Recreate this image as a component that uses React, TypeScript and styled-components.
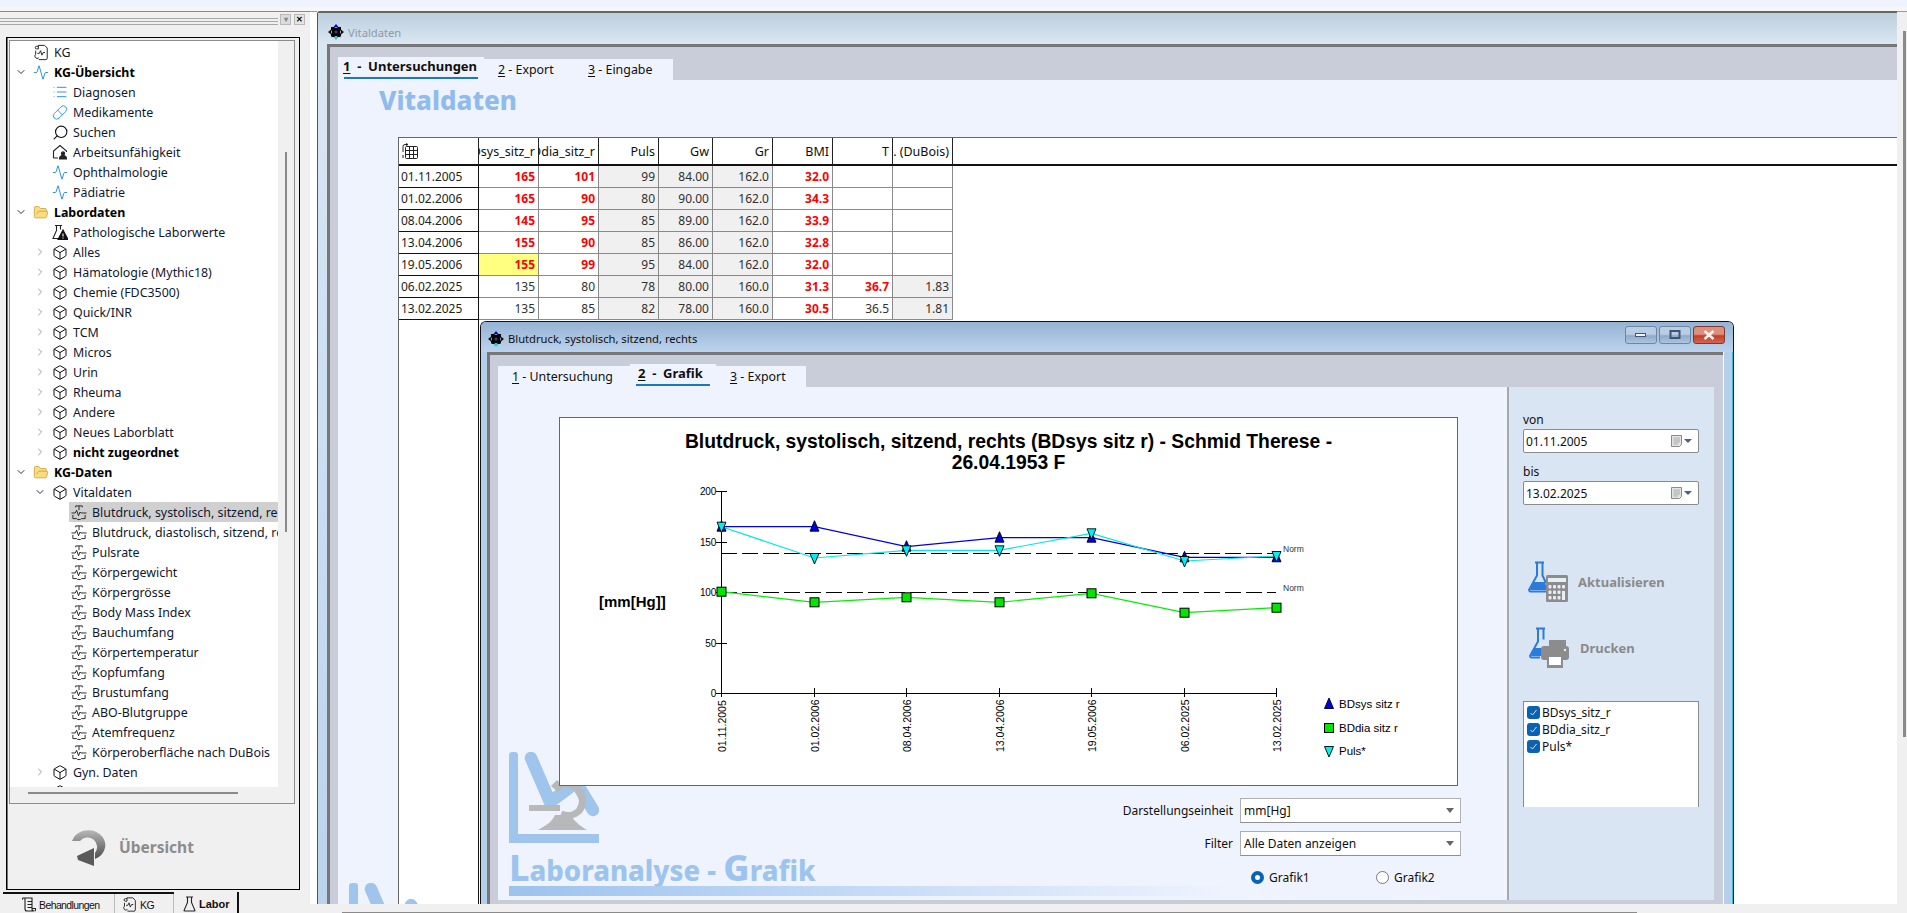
import React from "react";
import styled, { createGlobalStyle } from "styled-components";
import { Activity, Box, ChevronDown, ChevronRight, FolderOpen, List, Pill, Search } from "lucide-react";

const Global = createGlobalStyle`
  html, body { margin: 0; padding: 0; background: #f0f0f0; }
  * { box-sizing: border-box; }
  #root { width: 1907px; height: 913px; overflow: hidden; }
`;

const UI = `"Noto Sans", "Open Sans", sans-serif`;
const ARIAL = `"Liberation Sans", Arial, sans-serif`;

const Page = styled.div`
  width: 1907px; height: 913px; display: flex; flex-direction: column;
  background: #f0f0f0; font-family: ${UI}; font-size: 12px; color: #101010; overflow: hidden;
`;
const TopBand = styled.div`height: 7px; background: #eff3fe; flex: none;`;
const TopGap = styled.div`height: 4px; background: #f6f6f6; flex: none;`;
const Workspace = styled.div`flex: 1; display: flex; min-height: 0;`;

/* left dock */
const Dock = styled.aside`
  width: 310px; flex: none; display: flex; flex-direction: column;
  border-top: 1px solid #8a8a8a; background: #f0f0f0;
`;
const DockHead = styled.div`height: 25px; flex: none; display: flex; align-items: flex-start; padding: 2px 5px 0 0; gap: 2px;`;
const Grip = styled.div`
  width: 280px; height: 7px; margin-top: 4px;
  border-top: 1px solid #a8a8a8; border-bottom: 1px solid #a8a8a8;
  background: linear-gradient(#f0f0f0 2px, #a8a8a8 2px, #a8a8a8 3px, #f0f0f0 3px);
`;
const DockBtn = styled.div<{ $dark?: boolean }>`
  width: 11px; height: 11px; display: flex; align-items: center; justify-content: center;
  background: ${p => (p.$dark ? "#e4e4e4" : "#dcdcdc")}; border: 1px solid #b8b8b8;
  color: ${p => (p.$dark ? "#000" : "#888")}; font: bold 8px ${ARIAL};
  &:last-child { margin-left: 1px; }
`;
const DockFrame = styled.div`
  height: 853px; flex: none; margin: 0 10px 0 6px; border: 1px solid #000;
  box-shadow: inset 1px 0 0 #777;
  padding: 2px 4px 0 2px; display: flex; flex-direction: column; background: #f0f0f0;
`;
const TreeBox = styled.div`height: 764px; flex: none; border: 1px solid #8c8c8c; display: flex; flex-direction: column;`;
const TreeRowWrap = styled.div`display: flex; height: 746px; flex: none;`;
const Tree = styled.div`width: 268px; background: #fff; padding-top: 1px; overflow: hidden; flex: none;`;
const VTrack = styled.div`flex: 1; padding: 111px 0 0 7px;`;
const VThumb = styled.div`width: 2px; height: 380px; background: #8a8a8a;`;
const HTrack = styled.div`flex: 1; padding: 5px 0 0 18px;`;
const HThumb = styled.div`width: 210px; height: 2px; background: #8a8a8a;`;
const Row = styled.div<{ $level: number }>`
  height: 20px; display: flex; align-items: center; white-space: nowrap;
  padding-left: ${p => 5 + p.$level * 19}px;
`;
const ChevSlot = styled.span<{ $dark?: boolean }>`
  width: 16px; flex: none; display: flex; color: ${p => (p.$dark ? "#333" : "#a0a0a0")};
`;
const Item = styled.div<{ $selected?: boolean }>`
  flex: 1; height: 20px; display: flex; align-items: center; gap: 5px; padding-left: 2px; overflow: hidden;
  background: ${p => (p.$selected ? "#d0d0d0" : "transparent")};
`;
const IconSlot = styled.span`width: 16px; height: 16px; flex: none; display: flex; align-items: center; justify-content: center;`;
const Flip = styled.span`display: flex; transform: scaleX(-1);`;
const ItemLabel = styled.span<{ $bold?: boolean }>`
  font-size: 12.4px; font-weight: ${p => (p.$bold ? 700 : 400)}; color: ${p => (p.$bold ? "#000" : "#101830")};
`;
const Overview = styled.div`flex: 1; display: flex; align-items: center; gap: 11px; padding: 0 0 0 61px;`;
const OverviewText = styled.span`font-size: 15.5px; font-weight: 700; color: #8c8c8c;`;
const BottomTabs = styled.div`height: 23px; flex: none; display: flex; margin: 2px 0 0 3px; padding-left: 12px; border-top: 2px solid transparent; position: relative; border-image: linear-gradient(90deg, #111 171px, transparent 171px) 1;`;
const DockTab = styled.div<{ $active?: boolean; $w: number; $pad: number }>`
  width: ${p => p.$w}px; padding-left: ${p => p.$pad}px; display: flex; align-items: center; gap: 3px;
  font-family: ${ARIAL}; font-size: ${p => (p.$active ? 11 : 10.5)}px; letter-spacing: ${p => (p.$active ? 0 : -0.6)}px; font-weight: ${p => (p.$active ? 700 : 400)};
  border-right: 1px solid ${p => (p.$active ? "#111" : "#bbb")};
  ${p => p.$active && "border-right-width: 2px; margin-top: -2px;"}
`;
const WhiteGutter = styled.div`width: 7px; flex: none; background: #fff; border-top: 1px solid #9a9a9a; margin-bottom: 9px;`;

/* main window */
const MainColumn = styled.div`width: 1580px; flex: none; display: flex; flex-direction: column;`;
const MainWindow = styled.section`flex: 1; display: flex; flex-direction: column; min-height: 0; border-left: 1px solid #555; border-top: 2px solid #666; border-radius: 3px 0 0 0;`;
const TitleBar = styled.div<{ $active?: boolean }>`
  height: ${p => (p.$active ? 30 : 31)}px; flex: none; display: flex; align-items: center; gap: 4px;
  padding: ${p => (p.$active ? "3px 0 0 7px" : "7px 0 0 10px")};
  font-size: 11.2px; color: ${p => (p.$active ? "#101010" : "#8e9aa5")};
  background: ${p => (p.$active ? "linear-gradient(#95b3d3, #bcd3ee)" : "linear-gradient(#bdcedc, #dae7f3)")};
`;
const WindowBody = styled.div`flex: 1; display: flex; min-height: 0; padding-left: 9px; background: linear-gradient(#dae7f3, #bcd3ee);`;
const Frame = styled.div`
  flex: 1; min-width: 0; display: flex; flex-direction: column;
  border-left: 3px solid #777; border-top: 3px solid #777; background: #c8cdd9; padding-left: 8px;
`;
const TabStrip = styled.div<{ $h: number }>`height: ${p => p.$h}px; flex: none; display: flex; align-items: flex-end;`;
const Tab = styled.div<{ $active?: boolean; $w: number; $pad: number }>`
  width: ${p => p.$w}px; height: ${p => (p.$active ? 23 : 21)}px; flex: none; padding-left: ${p => p.$pad}px;
  background: #eff3fe; position: relative; white-space: nowrap; line-height: ${p => (p.$active ? 18 : 21)}px;
  font-size: ${p => (p.$active ? 13 : 12.4)}px; font-weight: ${p => (p.$active ? 700 : 400)};
  u { text-underline-offset: 2px; }
`;
const TabLine = styled.div<{ $l: number; $r: number }>`
  position: absolute; left: ${p => p.$l}px; right: ${p => p.$r}px; bottom: 1px; height: 2px; background: #1a78c2;
`;
const MainContent = styled.div`flex: 1; min-height: 0; background: #eff3fe; position: relative; overflow: hidden; display: flex; flex-direction: column;`;
const Heading = styled.h1`
  margin: 4px 0 0 41px; height: 33px; font-size: 26px; line-height: 33px; font-weight: 800; color: #8fbcec; flex: none;
`;
const TableWrap = styled.div`
  flex: 1; margin: 20px 0 0 60px; background: #fff; border-left: 1px solid #666; border-top: 1px solid #666; min-height: 0;
`;
const Table = styled.table`
  width: 100%; table-layout: fixed; border-collapse: separate; border-spacing: 0; font-size: 12px;
`;
const Th = styled.th`
  height: 28px; padding: 0; font-weight: 400; font-size: 12.5px; border-right: 1px solid #222; border-bottom: 2px solid #111;
  &:last-child { border-right: none; }
`;
const ThInner = styled.div`display: flex; justify-content: flex-end; overflow: hidden; padding-right: 3px; white-space: nowrap;`;
const ThIcon = styled.div`display: flex; padding-left: 3px;`;
const DateCell = styled.td`
  height: 22px; padding: 0 0 0 2px; border-right: 1px solid #111; border-bottom: 1px solid #111; color: #222;
`;
const Td = styled.td<{ $gray?: boolean; $red?: boolean; $yellow?: boolean }>`
  height: 22px; padding: 0 3px 0 0; text-align: right; border-right: 1px solid #8a8a8a; border-bottom: 1px solid #8a8a8a;
  background: ${p => (p.$yellow ? "#ffff80" : p.$gray ? "#f0f0f0" : "#fff")};
  color: ${p => (p.$red ? "#ff0000" : "#303030")}; font-weight: ${p => (p.$red ? 700 : 400)};
`;
const EmptyCell = styled.td``;
const SpacerCell = styled.td`height: 585px; border-right: 1px solid #111; vertical-align: top;`;

/* sub window */
const SubWindow = styled.section`
  position: absolute; left: 142px; top: 241px; right: 163px; bottom: 0; display: flex; flex-direction: column;
  border: 1px solid #111; border-bottom: none; border-right: 1px solid #101030; border-radius: 6px 6px 0 0; overflow: hidden;
`;
const SubTitleText = styled.span`flex: 1;`;
const WinBtns = styled.div`display: flex; gap: 2px; padding-right: 8px; margin-top: -7px;`;
const WinBtn = styled.div<{ $close?: boolean }>`
  width: 32px; height: 18px; border-radius: 3px; display: flex; align-items: center; justify-content: center;
  border: 1px solid ${p => (p.$close ? "#7c3a30" : "#6d86a4")};
  background: ${p => (p.$close ? "linear-gradient(#dd8f7d 0 45%, #c0402a 55%, #d4654e)" : "linear-gradient(#b9cde3 0 45%, #8fabcb 55%, #adc4dd)")};
`;
const SubBody = styled.div`flex: 1; min-height: 0; display: flex; padding-left: 6px; background: #b6cfe9; border-right: 1px solid #25c4e4;`;
const SubFrame = styled.div`
  flex: 1; min-width: 0; display: flex; flex-direction: column; background: #c8cdd9;
  border-left: 3px solid #777; border-top: 3px solid #777; padding: 0 9px 4px 8px; margin-right: 9px;
  box-shadow: 1px 0 0 #fff;
`;
const SubContent = styled.div`flex: 1; min-height: 0; display: flex;`;
const GraphArea = styled.div`width: 1009px; flex: none; background: #eff3fe; position: relative; padding: 30px 0 0 61px; overflow: hidden;`;
const SidePanel = styled.div`flex: 1; background: #dae5f3; border-left: 2px solid #a8a8a8; padding: 24px 0 0 14px;`;
const ChartBox = styled.div`
  width: 899px; height: 369px; background: #fff; border: 1px solid #666; position: relative; z-index: 1;
`;
const ChartTitle = styled.div`
  height: 60px; padding-top: 13px; text-align: center; font: 700 19.3px/21px ${ARIAL}; color: #000;
`;
const ChartSvg = styled.svg`display: block;`;
const ControlRow = styled.div`
  display: flex; justify-content: flex-end; align-items: center; gap: 7px; height: 25px; padding-right: 46px; position: relative; z-index: 1;
`;
const Controls = styled.div`display: flex; flex-direction: column; gap: 8px; margin-top: 12px;`;
const SelectBox = styled.div`
  width: 221px; height: 25px; background: #fff; border: 1px solid #b0b0b0; border-bottom-color: #909090;
  display: flex; align-items: center; justify-content: space-between; padding: 0 6px 0 3px;
`;
const Caret = styled.span`width: 0; height: 0; border-left: 4px solid transparent; border-right: 4px solid transparent; border-top: 5px solid #666;`;
const RadioRow = styled.div`display: flex; margin: 13px 0 0 692px; position: relative; z-index: 1;`;
const RadioOpt = styled.label`width: 125px; display: flex; align-items: center; gap: 5px; height: 16px;`;
const RadioDot = styled.span<{ $on?: boolean }>`
  width: 13px; height: 13px; border-radius: 50%; background: #fff;
  border: ${p => (p.$on ? "4px solid #0a62b6" : "1px solid #777")};
`;
const Watermark = styled.div`position: absolute; left: 11px; top: 365px; width: 720px; display: flex; flex-direction: column;`;
const LogoSlot = styled.div<{ $clip?: boolean }>`
  display: flex;
  ${p => p.$clip && "position: absolute; left: 11px; top: 803px;"}
`;
const WmTitle = styled.div`
  height: 33px; margin-top: 7px; font: 800 27.500px/33px ${UI}; color: #9cc4ee; white-space: nowrap;
`;
const WmCap = styled.span`font-size: 36px;`;
const WmBar = styled.div`height: 10px; margin-top: 2px; background: linear-gradient(90deg, #9cc3ee, #eff3fe);`;

const SideLabel = styled.div`height: 18px; line-height: 17px;`;
const DateBox = styled.div`
  width: 176px; height: 24px; background: #fff; border: 1px solid #8a8a8a; border-radius: 2px;
  display: flex; align-items: center; justify-content: space-between; padding: 0 6px 0 2px; margin-bottom: 10px; font-size: 12px;
`;
const DateTools = styled.span`display: flex; align-items: center; gap: 2px;`;
const SmallCaret = styled.span`width: 0; height: 0; border-left: 4px solid transparent; border-right: 4px solid transparent; border-top: 4px solid #4f5f80;`;
const ActionBtn = styled.div<{ $mt: number }>`
  display: flex; align-items: center; gap: 10px; margin-top: ${p => p.$mt}px; padding-left: 4px;
`;
const ActionText = styled.span`font-size: 13px; font-weight: 700; color: #8a8a8a;`;
const CheckList = styled.div`
  width: 176px; height: 106px; margin-top: 32px; background: #fff; border: 1px solid #8a8a8a; border-bottom: none; padding: 2px;
`;
const CheckRow = styled.div`height: 17px; display: flex; align-items: center; gap: 2px;`;
const CheckMark = styled.span`width: 13px; height: 13px; border-radius: 3px; background: #0a62b6; display: flex; align-items: center; justify-content: center; margin-left: 1px;`;

const BottomStrip = styled.div`height: 9px; flex: none; padding: 8px 0 0 25px; background: #f0f0f0;`;
const BottomThumb = styled.div`width: 1295px; height: 1px; background: #8a8a8a;`;
const RightGutter = styled.div`flex: 1; padding: 19px 0 0 6px; background: #f0f0f0; border-top: 1px solid #9a9a9a;`;
const RightThumb = styled.div`width: 3px; height: 706px; background: #8a8a8a;`;

/* icons */
const VitalIcon = () => (
  <svg width="17" height="17" viewBox="0 0 17 17" fill="none" stroke="#222" strokeWidth="1">
    <path d="M5 3V1.500h7V3M8.500 1.500V6" />
    <path d="M0.500 9h4l1.500-3 2 6 1.500-4 1 1h6" />
    <path d="M2 11v4h4l1 1h3l1-1h4v-4" />
  </svg>
);
const KgIcon = ({ s = 18 }: { s?: number }) => (
  <svg width={s} height={s} viewBox="0 0 18 18" fill="none" stroke="#222" strokeWidth="1.100">
    <path d="M6 1h7l3 3v11.500a1.500 1.500 0 0 1-1.500 1.500H6.500M6 1v4H4a1.500 1.500 0 0 1 0-3h2M3 11V7M3 11a2 2 0 0 0 3.500 4" />
    <path d="M5 10h2l1.500-3 1.500 5 1.500-3h2" stroke="#222" />
  </svg>
);
const HouseIcon = () => (
  <svg width="16" height="16" viewBox="0 0 16 16" fill="none" stroke="#222" strokeWidth="1.100">
    <path d="M1.500 14V7L8 1.500 14.500 7v1M1.500 14H6" />
    <circle cx="11" cy="9.500" r="1.600" fill="#222" />
    <path d="M7.500 15c0-2.500 1.500-3.500 3.500-3.500s3.500 1 3.500 3.500z" fill="#222" />
  </svg>
);
const FlaskWarn = () => (
  <svg width="16" height="16" viewBox="0 0 16 16" fill="none" stroke="#222" strokeWidth="1.100">
    <path d="M3 1.500h7M4.500 1.500v5L1 14.500h5M8.500 1.500v4" />
    <path d="M11 6l5 9.500H6z" fill="#111" stroke="#111" />
    <path d="M11 9.500v3M11 13.500v1" stroke="#fff" />
  </svg>
);
const Diamond = () => (
  <svg width="16" height="16" viewBox="0 0 16 16">
    <path d="M8 0l2.500 3h-5z" fill="#0000e0" />
    <path d="M0 8l3-2.500v5zM16 8l-3-2.500v5z" fill="#111" />
    <path d="M8 16l-2.500-3h5z" fill="#20d0d0" />
    <path d="M3 3h3l2 1 2-1h3v3l-1 2 1 2v3h-3l-2-1-2 1H3v-3l1-2-1-2z" fill="#050505" />
    <path d="M2 11l3 3H3zM14 11l-3 3h2z" fill="#8ff0f0" />
    <circle cx="8" cy="8" r="1.500" fill="#3a3a8a" />
  </svg>
);
const GridIcon = () => (
  <svg width="17" height="17" viewBox="0 0 17 17" fill="none" stroke="#222" strokeWidth="1">
    <rect x="3.500" y="3.500" width="12" height="12" rx="1" />
    <path d="M3.500 7.500h12M3.500 11.500h12M7.500 3.500v12M11.500 3.500v12" />
    <path d="M1 9V3.500A2 2 0 0 1 3 1.500h3M1 12v3M4 0.500l2 1-2 1" />
  </svg>
);
const ScrollIcon = () => (
  <svg width="14" height="15" viewBox="0 0 14 15" fill="none" stroke="#222" strokeWidth="1.100">
    <path d="M1 1h9v11a2 2 0 0 0 2 2H5a2 2 0 0 1-2-2V1M1 1a2 2 0 0 0-1 2M5.500 4.500h4M5.500 7.500h4M5.500 10.500h4" />
    <path d="M10 11.500h3.500V13a1 1 0 0 1-1 1" />
  </svg>
);
const FlaskOutline = () => (
  <svg width="13" height="16" viewBox="0 0 13 16" fill="none" stroke="#222" strokeWidth="1.100">
    <path d="M3 1h7M4.500 1v5.500L1 14.500a.5.5 0 0 0 .5.5h10a.5.5 0 0 0 .5-.5L8.500 6.500V1" />
  </svg>
);
const BackArrow = () => (
  <svg width="38" height="43" viewBox="0 0 38 43">
    <defs>
      <linearGradient id="ba" x1="0" y1="0" x2="0" y2="1">
        <stop offset="0" stopColor="#b8b6b6" />
        <stop offset="1" stopColor="#4e4e4e" />
      </linearGradient>
    </defs>
    <path d="M2 15 A17 15 0 1 1 25 33 L25 27 A9 9 0 1 0 10 15 Z" fill="url(#ba)" transform="translate(0 1)" />
    <path d="M24 23 L24 41 L8 35 L7 31 Z" fill="#5a5a5a" />
  </svg>
);
const Calendar = () => (
  <svg width="11" height="12" viewBox="0 0 11 12">
    <path d="M.500.500h10v9l-2 2h-8z" fill="#e4e4e4" stroke="#8a8a8a" />
    <path d="M2 3h7M2 5h7M2 7h7M2 9h5M4 2.500v7M6 2.500v7M8 2.500v5" stroke="#a8a8a8" strokeWidth=".6" />
  </svg>
);
const FlaskCalc = () => (
  <svg width="41" height="41" viewBox="0 0 41 41">
    <path d="M8 1.500h9M10 1.500v13L2.500 28a1.500 1.500 0 0 0 1.500 2.500h15" fill="none" stroke="#2a7bdc" strokeWidth="2" />
    <path d="M15.500 1.500v13L19 22" fill="none" stroke="#2a7bdc" strokeWidth="2" />
    <path d="M6 21h12l2 8H3z" fill="#2a7bdc" />
    <rect x="19" y="14" width="22" height="27" rx="1.500" fill="#8c8c8c" />
    <rect x="21" y="17" width="18" height="4" fill="#e8eef6" />
    {[0, 1, 2].map(r => [0, 1, 2, 3].map(c => (c === 3 && r > 0 ? null : <rect key={`${r}${c}`} x={21.5 + c * 4.5} y={24 + r * 5.5} width="3" height="3.500" rx="1" fill="#e8eef6" />)))}
    <rect x="35" y="30" width="3" height="9" fill="#e8eef6" />
  </svg>
);
const FlaskPrint = () => (
  <svg width="43" height="42" viewBox="0 0 43 42">
    <path d="M9 1.500h9M11 1.500v13L3.500 28a1.500 1.500 0 0 0 1.500 2.500h8" fill="none" stroke="#2a7bdc" strokeWidth="2" />
    <path d="M16.500 1.500v11" fill="none" stroke="#2a7bdc" strokeWidth="2" />
    <path d="M7 21h8v8H4z" fill="#2a7bdc" />
    <rect x="22" y="13" width="17" height="6" fill="#8c8c8c" />
    <rect x="14" y="19" width="28" height="14" rx="3" fill="#8c8c8c" />
    <rect x="20" y="28" width="16" height="13" fill="#8c8c8c" />
    <rect x="22" y="30" width="12" height="8" fill="#fff" />
    <circle cx="38" cy="23" r="1.200" fill="#e8eef6" />
  </svg>
);
const MicroscopeLogo = () => (
  <svg width="95" height="92" viewBox="0 0 95 92" fill="none">
    <rect x="0" y="0" width="9" height="91" rx="3" fill="#9fc5ec" />
    <rect x="0" y="82" width="90" height="9" fill="#9fc5ec" />
    <path d="M22 6 L41 50 L60 36" stroke="#9fc5ec" strokeWidth="12.500" strokeLinecap="round" strokeLinejoin="round" />
    <path d="M62 22 L84 58" stroke="#9fc5ec" strokeWidth="12.500" strokeLinecap="round" />
    <path d="M50 33 a17 17 0 0 1 20 26 a17 17 0 0 1 -18 3" stroke="#b6b8ba" strokeWidth="7" />
    <rect x="20" y="53" width="31" height="6" fill="#b6b8ba" />
    <path d="M42 34l6-6 6 7-5 5z" fill="#b6b8ba" />
    <path d="M29 78 C40 72 44 68 46 63 L62 63 C64 68 70 73 78 78z" fill="#b6b8ba" />
  </svg>
);

type Ic = "kg" | "pulse" | "list" | "pill" | "search" | "house" | "folder" | "warn" | "box" | "vital";
const iconFor = (k: Ic) => {
  switch (k) {
    case "kg": return <KgIcon s={17} />;
    case "pulse": return <Activity size={17} color="#1e8ae0" strokeWidth={1.4} />;
    case "list": return <List size={16} color="#1e8ae0" strokeWidth={1.4} />;
    case "pill": return <Pill size={17} color="#1e8ae0" strokeWidth={1.3} />;
    case "search": return <Flip><Search size={17} color="#111" strokeWidth={1.6} /></Flip>;
    case "house": return <HouseIcon />;
    case "folder": return <FolderOpen size={17} color="#c9a035" fill="#fbdc80" strokeWidth={1.2} />;
    case "warn": return <FlaskWarn />;
    case "box": return <Box size={17} color="#111" strokeWidth={1.5} />;
    case "vital": return <VitalIcon />;
  }
};

type Node = { l: number; t: string; i: Ic; c?: "o" | "c"; b?: boolean; s?: boolean };
const tree: Node[] = [
  { l: 0, t: "KG", i: "kg" },
  { l: 0, t: "KG-Übersicht", i: "pulse", c: "o", b: true },
  { l: 1, t: "Diagnosen", i: "list" },
  { l: 1, t: "Medikamente", i: "pill" },
  { l: 1, t: "Suchen", i: "search" },
  { l: 1, t: "Arbeitsunfähigkeit", i: "house" },
  { l: 1, t: "Ophthalmologie", i: "pulse" },
  { l: 1, t: "Pädiatrie", i: "pulse" },
  { l: 0, t: "Labordaten", i: "folder", c: "o", b: true },
  { l: 1, t: "Pathologische Laborwerte", i: "warn" },
  ...["Alles", "Hämatologie (Mythic18)", "Chemie (FDC3500)", "Quick/INR", "TCM", "Micros", "Urin", "Rheuma", "Andere", "Neues Laborblatt"].map(t => ({ l: 1, t, i: "box" as Ic, c: "c" as const })),
  { l: 1, t: "nicht zugeordnet", i: "box", c: "c", b: true },
  { l: 0, t: "KG-Daten", i: "folder", c: "o", b: true },
  { l: 1, t: "Vitaldaten", i: "box", c: "o" },
  { l: 2, t: "Blutdruck, systolisch, sitzend, rechts", i: "vital", s: true },
  ...["Blutdruck, diastolisch, sitzend, rechts", "Pulsrate", "Körpergewicht", "Körpergrösse", "Body Mass Index", "Bauchumfang", "Körpertemperatur", "Kopfumfang", "Brustumfang", "ABO-Blutgruppe", "Atemfrequenz", "Körperoberfläche nach DuBois"].map(t => ({ l: 2, t, i: "vital" as Ic })),
  { l: 1, t: "Gyn. Daten", i: "box", c: "c" },
  { l: 1, t: " ", i: "box" },
];

type Rec = { d: string; sys: string; dia: string; p: string; g: string; gr: string; b: string; t: string; k: string; sr: boolean; dr: boolean; tr?: boolean; y?: boolean };
const rows: Rec[] = [
  { d: "01.11.2005", sys: "165", dia: "101", p: "99", g: "84.00", gr: "162.0", b: "32.0", t: "", k: "", sr: true, dr: true },
  { d: "01.02.2006", sys: "165", dia: "90", p: "80", g: "90.00", gr: "162.0", b: "34.3", t: "", k: "", sr: true, dr: true },
  { d: "08.04.2006", sys: "145", dia: "95", p: "85", g: "89.00", gr: "162.0", b: "33.9", t: "", k: "", sr: true, dr: true },
  { d: "13.04.2006", sys: "155", dia: "90", p: "85", g: "86.00", gr: "162.0", b: "32.8", t: "", k: "", sr: true, dr: true },
  { d: "19.05.2006", sys: "155", dia: "99", p: "95", g: "84.00", gr: "162.0", b: "32.0", t: "", k: "", sr: true, dr: true, y: true },
  { d: "06.02.2025", sys: "135", dia: "80", p: "78", g: "80.00", gr: "160.0", b: "31.3", t: "36.7", k: "1.83", sr: false, dr: false, tr: true },
  { d: "13.02.2025", sys: "135", dia: "85", p: "82", g: "78.00", gr: "160.0", b: "30.5", t: "36.5", k: "1.81", sr: false, dr: false },
];
const headers: [string, number][] = [["BDsys_sitz_r", 60], ["BDdia_sitz_r", 60], ["Puls", 60], ["Gw", 54], ["Gr", 60], ["BMI", 60], ["T", 60], ["Oberfl. (DuBois)", 60]];

const xs = [721.5, 814.5, 906.5, 999.5, 1091.5, 1184.5, 1276.5];
const dates = ["01.11.2005", "01.02.2006", "08.04.2006", "13.04.2006", "19.05.2006", "06.02.2025", "13.02.2025"];
const sysY = [526.7, 526.7, 546.7, 537.7, 537.7, 557.3, 557.3];
const pulsY = [526.7, 558, 550.3, 550.3, 533.3, 561, 556];
const diaY = [591.7, 602.3, 597.3, 602.3, 593.3, 612.7, 607.7];
const pts = (ys: number[]) => ys.map((y, i) => `${xs[i]},${y}`).join(" ");

const Up = ({ x, y }: { x: number; y: number }) => <path d={`M${x} ${y - 6}L${x + 4.5} ${y + 4.5}H${x - 4.5}Z`} fill="#0000e6" stroke="#000" strokeWidth=".9" />;
const Down = ({ x, y }: { x: number; y: number }) => <path d={`M${x} ${y + 6}L${x + 4.5} ${y - 4.5}H${x - 4.5}Z`} fill="#00f0f0" stroke="#000" strokeWidth=".9" />;
const Sq = ({ x, y }: { x: number; y: number }) => <rect x={x - 4.5} y={y - 4.5} width="9" height="9" fill="#00e600" stroke="#000" strokeWidth="1" />;

const Chart = () => (
  <ChartSvg width="897" height="307" viewBox="560 478 897 307" fontFamily={ARIAL} fill="#000">
    <path d="M721.500 491V693.500H1276.500" fill="none" stroke="#000" strokeWidth="1" />
    {[491.5, 542.5, 592.5, 643.5, 693.5].map((y, i) => (
      <g key={y}>
        <path d={`M716 ${y}H727`} stroke="#000" />
        <text x="716" y={y + 3.5} textAnchor="end" fontSize="10" letterSpacing="-.2">{[200, 150, 100, 50, 0][i]}</text>
      </g>
    ))}
    {xs.map((x, i) => (
      <g key={x}>
        <path d={`M${x} 688V697`} stroke="#000" />
        <text transform={`translate(${x + 4} 752) rotate(-90)`} fontSize="10.500">{dates[i]}</text>
      </g>
    ))}
    <path d="M721 553.500H1276M721 592.500H1276" stroke="#000" strokeDasharray="16 5" />
    <text x="1283" y="552" fontSize="8.500" fill="#333">Norm</text>
    <text x="1283" y="591" fontSize="8.500" fill="#333">Norm</text>
    <text x="599" y="607" fontSize="15" fontWeight="700">[mm[Hg]]</text>
    <polyline points={pts(sysY)} fill="none" stroke="#0000e6" strokeWidth="1.200" />
    <polyline points={pts(diaY)} fill="none" stroke="#00f000" strokeWidth="1.200" />
    <polyline points={pts(pulsY)} fill="none" stroke="#00e8e8" strokeWidth="1.200" />
    {xs.map((x, i) => <Up key={x} x={x} y={sysY[i]} />)}
    {xs.map((x, i) => <Sq key={x} x={x} y={diaY[i]} />)}
    {xs.map((x, i) => <Down key={x} x={x} y={pulsY[i]} />)}
    <Up x={1329} y={704} />
    <Sq x={1329} y={728} />
    <Down x={1329} y={751} />
    <text x="1339" y="708" fontSize="11.500">BDsys sitz r</text>
    <text x="1339" y="732" fontSize="11.500">BDdia sitz r</text>
    <text x="1339" y="755" fontSize="11.500">Puls*</text>
  </ChartSvg>
);

const Check = () => (
  <CheckMark>
    <svg width="9" height="9" viewBox="0 0 9 9" fill="none" stroke="#cfe0f5" strokeWidth="1"><path d="M1.500 5l2 2 4-5" /></svg>
  </CheckMark>
);

export default function App() {
  return (
    <Page>
      <Global />
      <TopBand />
      <TopGap />
      <Workspace>
        <Dock>
          <DockHead>
            <Grip />
            <DockBtn>▾</DockBtn>
            <DockBtn $dark>✕</DockBtn>
          </DockHead>
          <DockFrame>
            <TreeBox>
              <TreeRowWrap>
                <Tree>
                  {tree.map((n, idx) => (
                    <Row key={idx} $level={n.l}>
                      <ChevSlot $dark={n.c === "o"}>
                        {n.c === "o" && <ChevronDown size={12} strokeWidth={2} />}
                        {n.c === "c" && <ChevronRight size={12} strokeWidth={2} />}
                      </ChevSlot>
                      <Item $selected={n.s}>
                        <IconSlot>{iconFor(n.i)}</IconSlot>
                        <ItemLabel $bold={n.b}>{n.t}</ItemLabel>
                      </Item>
                    </Row>
                  ))}
                </Tree>
                <VTrack><VThumb /></VTrack>
              </TreeRowWrap>
              <HTrack><HThumb /></HTrack>
            </TreeBox>
            <Overview>
              <BackArrow />
              <OverviewText>Übersicht</OverviewText>
            </Overview>
          </DockFrame>
          <BottomTabs>
            <DockTab $w={100} $pad={7}><ScrollIcon />Behandlungen</DockTab>
            <DockTab $w={59} $pad={7}><KgIcon s={15} />KG</DockTab>
            <DockTab $active $w={65} $pad={9}><FlaskOutline />Labor</DockTab>
          </BottomTabs>
        </Dock>
        <WhiteGutter />
        <MainColumn>
          <MainWindow>
            <TitleBar><Diamond />Vitaldaten</TitleBar>
            <WindowBody>
              <Frame>
                <TabStrip $h={33}>
                  <Tab $active $w={146} $pad={5}>
                    <u>1</u>&nbsp; -&nbsp; Untersuchungen
                    <TabLine $l={6} $r={6} />
                  </Tab>
                  <Tab $w={90} $pad={14}><u>2</u>&nbsp;-&nbsp;Export</Tab>
                  <Tab $w={99} $pad={14}><u>3</u>&nbsp;-&nbsp;Eingabe</Tab>
                </TabStrip>
                <MainContent>
                  <LogoSlot $clip><MicroscopeLogo /></LogoSlot>
                  <Heading>Vitaldaten</Heading>
                  <TableWrap>
                    <Table>
                      <colgroup>
                        <col style={{ width: 80 }} />
                        {headers.map(([h, w]) => <col key={h} style={{ width: w }} />)}
                        <col />
                      </colgroup>
                      <thead>
                        <tr>
                          <Th><ThIcon><GridIcon /></ThIcon></Th>
                          {headers.map(([h]) => <Th key={h}><ThInner>{h}</ThInner></Th>)}
                          <Th />
                        </tr>
                      </thead>
                      <tbody>
                        {rows.map(r => (
                          <tr key={r.d}>
                            <DateCell>{r.d}</DateCell>
                            <Td $red={r.sr} $yellow={r.y}>{r.sys}</Td>
                            <Td $red={r.dr}>{r.dia}</Td>
                            <Td $gray>{r.p}</Td>
                            <Td $gray>{r.g}</Td>
                            <Td $gray>{r.gr}</Td>
                            <Td $red>{r.b}</Td>
                            <Td $red={r.tr}>{r.t}</Td>
                            <Td $gray={!!r.k}>{r.k}</Td>
                            <EmptyCell />
                          </tr>
                        ))}
                        <tr><SpacerCell /></tr>
                      </tbody>
                    </Table>
                  </TableWrap>
                  <SubWindow>
                    <TitleBar $active>
                      <Diamond />
                      <SubTitleText>Blutdruck, systolisch, sitzend, rechts</SubTitleText>
                      <WinBtns>
                        <WinBtn><svg width="12" height="6" viewBox="0 0 12 6"><rect x=".5" y="1.500" width="10" height="3" fill="#f0f4fa" stroke="#3f5673" /></svg></WinBtn>
                        <WinBtn><svg width="12" height="10" viewBox="0 0 12 10" fill="none"><rect x="1.500" y="1" width="9" height="7" stroke="#3f5673" strokeWidth="2" /></svg></WinBtn>
                        <WinBtn $close><svg width="12" height="10" viewBox="0 0 12 10" fill="none"><path d="M1.500 1l9 8M10.500 1l-9 8" stroke="#f6f0ee" strokeWidth="2.600" /></svg></WinBtn>
                      </WinBtns>
                    </TitleBar>
                    <SubBody>
                      <SubFrame>
                        <TabStrip $h={32}>
                          <Tab $w={132} $pad={14}><u>1</u>&nbsp;-&nbsp;Untersuchung</Tab>
                          <Tab $active $w={86} $pad={8}>
                            <u>2</u>&nbsp; -&nbsp; Grafik
                            <TabLine $l={6} $r={6} />
                          </Tab>
                          <Tab $w={90} $pad={14}><u>3</u>&nbsp;-&nbsp;Export</Tab>
                        </TabStrip>
                        <SubContent>
                          <GraphArea>
                            <Watermark>
                              <LogoSlot><MicroscopeLogo /></LogoSlot>
                              <WmTitle><WmCap>L</WmCap>aboranalyse - <WmCap>G</WmCap>rafik</WmTitle>
                              <WmBar />
                            </Watermark>
                            <ChartBox>
                              <ChartTitle>
                                Blutdruck, systolisch, sitzend, rechts (BDsys sitz r) - Schmid Therese -<br />26.04.1953 F
                              </ChartTitle>
                              <Chart />
                            </ChartBox>
                            <Controls>
                              <ControlRow>
                                Darstellungseinheit
                                <SelectBox>mm[Hg]<Caret /></SelectBox>
                              </ControlRow>
                              <ControlRow>
                                Filter
                                <SelectBox>Alle Daten anzeigen<Caret /></SelectBox>
                              </ControlRow>
                            </Controls>
                            <RadioRow>
                              <RadioOpt><RadioDot $on />Grafik1</RadioOpt>
                              <RadioOpt><RadioDot />Grafik2</RadioOpt>
                            </RadioRow>
                          </GraphArea>
                          <SidePanel>
                            <SideLabel>von</SideLabel>
                            <DateBox>01.11.2005<DateTools><Calendar /><SmallCaret /></DateTools></DateBox>
                            <SideLabel>bis</SideLabel>
                            <DateBox>13.02.2025<DateTools><Calendar /><SmallCaret /></DateTools></DateBox>
                            <ActionBtn $mt={56}><FlaskCalc /><ActionText>Aktualisieren</ActionText></ActionBtn>
                            <ActionBtn $mt={25}><FlaskPrint /><ActionText>Drucken</ActionText></ActionBtn>
                            <CheckList>
                              <CheckRow><Check />BDsys_sitz_r</CheckRow>
                              <CheckRow><Check />BDdia_sitz_r</CheckRow>
                              <CheckRow><Check />Puls*</CheckRow>
                            </CheckList>
                          </SidePanel>
                        </SubContent>
                      </SubFrame>
                    </SubBody>
                  </SubWindow>
                </MainContent>
              </Frame>
            </WindowBody>
          </MainWindow>
          <BottomStrip><BottomThumb /></BottomStrip>
        </MainColumn>
        <RightGutter><RightThumb /></RightGutter>
      </Workspace>
    </Page>
  );
}
